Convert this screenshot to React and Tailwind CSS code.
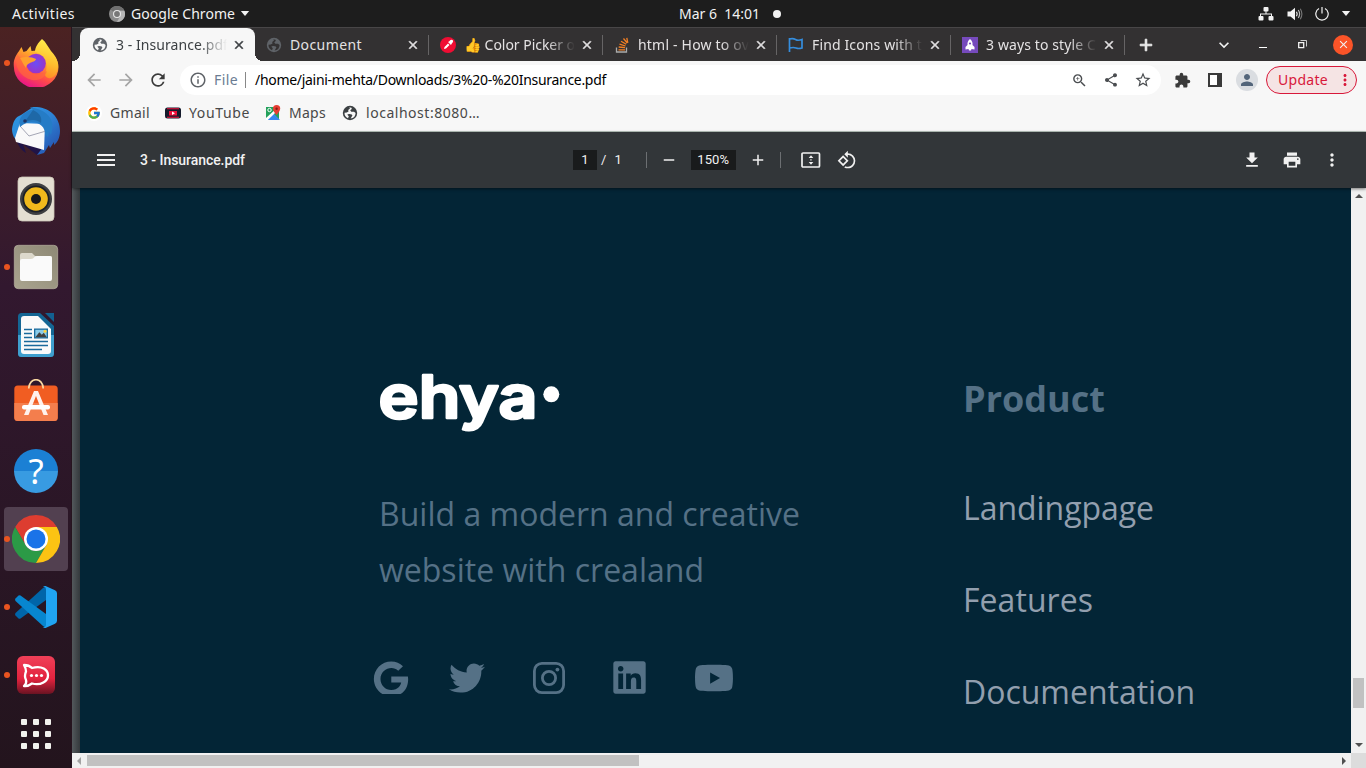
import { useLayoutEffect, useRef } from 'react';
import {
  MdAdd, MdArrowBack, MdArrowForward, MdClose, MdExtension, MdInfoOutline, MdKeyboardArrowDown,
  MdMenu, MdMoreVert, MdPerson, MdPrint, MdRefresh, MdRemove, MdRotate90DegreesCcw,
  MdShare, MdStarBorder, MdFileDownload, MdZoomIn,
} from 'react-icons/md';
import { FcGoogle } from 'react-icons/fc';
import { FaGoogle, FaLinkedin, FaTwitter, FaYoutube } from 'react-icons/fa';

// Spreads the letters so that the text fills exactly w pixels.
function Fit({ w, className = '', children }) {
  const ref = useRef(null);
  useLayoutEffect(() => {
    const el = ref.current;
    el.style.letterSpacing = '0px';
    const natural = el.getBoundingClientRect().width;
    el.style.letterSpacing = `${(w - natural) / el.textContent.length}px`;
  }, [w, children]);
  return <span ref={ref} className={`inline-block shrink-0 whitespace-pre ${className}`}>{children}</span>;
}

function Caret({ className = '' }) {
  return <svg viewBox="0 0 10 6" className={`h-[5px] w-[10px] shrink-0 ${className}`}><path d="M0 0h10L5 6z" fill="#f2f2f2" /></svg>;
}

// A solid disc with the seas left open as even-odd holes.
function Globe({ className = '' }) {
  return (
    <svg viewBox="0 0 16 16" className={`size-4 shrink-0 ${className}`} fill="currentColor" fillRule="evenodd">
      <path d="M8 .8a7.200 7.200 0 1 1 0 14.400A7.200 7.200 0 0 1 8 .8zM2.500 7.800Q2.300 11.800 6 13.200L6.800 11.200 5.300 9.800Q6 8.800 7.500 9L9.800 9.500Q11 10.300 9.800 11.500L8.600 13.500Q13.300 13 13.600 8L12 6.800H9.300L8.200 5.200 9.800 4 9.500 2.700Q8.300 2.400 7.200 2.600L8 3.500 6.200 5 6.500 6.500 4.800 7.500z" />
    </svg>
  );
}

function TopBar() {
  return (
    <header className="flex h-[27px] shrink-0 items-center bg-[#1d1d1d] text-sm text-[#f2f2f2]">
      <div className="flex w-[679px] items-center pl-3">
        <Fit w={63}>Activities</Fit>
        <svg viewBox="0 0 16 16" className="ml-[34px] size-4">
          <circle cx="8" cy="8" r="8" fill="#8b8b8b" />
          <path d="M8 4.4h7.2A8 8 0 0 1 8 16l3.2-6z" fill="#b5b5b5" />
          <path d="M1.5 3.5A8 8 0 0 1 15.2 4.4H8L4.8 6z" fill="#707070" />
          <circle cx="8" cy="8" r="4" fill="#e8e8e8" /><circle cx="8" cy="8" r="2.9" fill="#777" />
        </svg>
        <Fit w={104} className="ml-[6px]">Google Chrome</Fit>
        <Caret className="ml-[5px]" />
      </div>
      <Fit w={81}>{'Mar 6  14:01'}</Fit>
      <span className="ml-[13px] size-2 rounded-full bg-[#f2f2f2]" />
      <div className="ml-auto flex items-center pr-[15px]">
        <svg viewBox="0 0 16 14" className="h-[14px] w-4" fill="#f2f2f2">
          <rect x="5.5" y="0" width="5" height="4.5" rx="1" /><rect x="0.500" y="9" width="5" height="4.5" rx="1" /><rect x="10.5" y="9" width="5" height="4.5" rx="1" />
          <path d="M7.5 4h1v2.5H14V9h-1V7.500H3V9H2V6.500h5.500z" />
        </svg>
        <svg viewBox="0 0 16 14" className="ml-[13px] h-[14px] w-4">
          <path d="M0.500 4.500h3L8 .8v12.400L3.500 9.500h-3z" fill="#f2f2f2" />
          <path d="M9.500 4.700q1.400 2.300 0 4.600" stroke="#f2f2f2" strokeWidth="1.200" fill="none" />
          <path d="M11.300 3q2.600 4 0 8" stroke="#bbb" strokeWidth="1.200" fill="none" />
          <path d="M13.300 1.800q3.200 5.200 0 10.400" stroke="#777" strokeWidth="1.100" fill="none" />
        </svg>
        <svg viewBox="0 0 14 14" className="ml-[12px] size-[14px]" fill="none" stroke="#f2f2f2" strokeWidth="1.200">
          <path d="M4 1.500a6.200 6.200 0 1 0 6 0M7 0v6.500" />
        </svg>
        <Caret className="ml-[12px]" />
      </div>
    </header>
  );
}

const dockIcons = {
  firefox: (
    <svg viewBox="0 0 48 48" className="size-12">
      <defs>
        <linearGradient id="fxBody" x1="0.8" y1="0" x2="0.3" y2="1"><stop offset="0" stopColor="#fff44f" /><stop offset=".35" stopColor="#ffa22c" /><stop offset=".7" stopColor="#ff4a4a" /><stop offset="1" stopColor="#e5108f" /></linearGradient>
        <linearGradient id="fxFlame" x1="0.6" y1="0" x2="0.4" y2="1"><stop offset="0" stopColor="#fff24d" /><stop offset=".6" stopColor="#ffbd2e" /><stop offset="1" stopColor="#ff8a25" /></linearGradient>
        <radialGradient id="fxGlobe"><stop offset="0" stopColor="#6b4df5" /><stop offset="1" stopColor="#9a34c9" /></radialGradient>
      </defs>
      <path d="M7 12 9.500 8l2 5 3-1 4-5 1 5 11-1 3-5 6 8c4 4 7 8 7 14a22.300 21 0 0 1-44.600 0c-1-7 2-12 6.600-18z" fill="url(#fxBody)" />
      <path d="M30 0c4 3 6 8 9 12 7 7 9 15 5 23-4 6-11 5-11 0 5-12-3-21-10-22 0-5 3-9 7-13z" fill="url(#fxFlame)" />
      <circle cx="24" cy="24.500" r="9.800" fill="url(#fxGlobe)" />
      <path d="M5 15q3 5 8 5l2 1q-2 4 0 8c4 8 14 8 20 3-2 7-8 10-15 9C7 38 2 27 5 15z" fill="#ff6a3c" fillOpacity=".65" />
      <path d="M8 19c7-2 12-1 16 1 0 2-4 3-6 4-3 1-4 3-4 5-3-4-4-7-6-10z" fill="#ffa12d" />
    </svg>
  ),
  thunderbird: (
    <svg viewBox="0 0 48 48" className="size-12">
      <defs><linearGradient id="tbBlue" x1="0" y1="0" x2="1" y2="1"><stop offset="0" stopColor="#2c9be5" /><stop offset=".5" stopColor="#2e83d5" /><stop offset="1" stopColor="#2449a8" /></linearGradient></defs>
      <path d="M4 32q3 10 10 14l-3-9 22 5-8 6z" fill="#201448" />
      <path d="M21 0c15-1 27 9 27 24 0 7-3 12-6 14l0-3-4 6-1-3-5 8-7 2 6-8L6 34C2 32 0 27 0 22 1 15 3 10 9 8z" fill="url(#tbBlue)" />
      <path d="M3 31 8 16l25 1-1 26L4 35z" fill="#f9f9fa" />
      <path d="m8 19 9 10 17-5" fill="none" stroke="#a4a6b5" />
      <path d="M8 20C5 10 14 3 21 3l-3-3c18 3 26 13 21 28l-2-4-1 6-3-3C34 18 20 9 8 20z" fill="#257cc6" />
      <path d="M21 3c8 4 9 8 8 13-5-4-11-4-17 0z" fill="#1d639f" fillOpacity=".8" /><circle cx="13" cy="14" r="1.800" fill="#1c3466" />
    </svg>
  ),
  rhythmbox: (
    <svg viewBox="0 0 48 48" className="size-12">
      <rect x="6" y="2" width="36" height="44" rx="4" fill="#e4dfd2" stroke="#cbc5b6" strokeWidth=".8" />
      <circle cx="24" cy="24" r="16" fill="#3e3f41" /><circle cx="24" cy="24" r="13.600" fill="#1c2027" />
      <circle cx="24" cy="24" r="11.800" fill="#f0b91c" /><circle cx="24" cy="24" r="5" fill="#17191c" />
    </svg>
  ),
  files: (
    <svg viewBox="0 0 48 48" className="size-12">
      <defs><linearGradient id="flBg" x1="0" y1="1" x2="1" y2="0"><stop offset="0" stopColor="#aaa48f" /><stop offset="1" stopColor="#8e8976" /></linearGradient></defs>
      <rect x="2.300" y="2.300" width="43.400" height="43.400" rx="4" fill="url(#flBg)" stroke="#b8b2a0" strokeWidth=".7" />
      <path d="M8 35V12q0-2 2-2h10l3 3h15q2 0 2 2v20z" fill="#dcd8cb" />
      <path d="M8 18q0-2 2-2h9q2 0 4-2.500 1-.5 2-.5h13q2 0 2 2v21q0 2-2 2H10q-2 0-2-2z" fill="#fafafa" />
    </svg>
  ),
  writer: (
    <svg viewBox="0 0 48 48" className="size-12">
      <path d="M9.500 2H28l14 13v27q0 4-3.500 4H9.500Q6 46 6 42.500V5.500Q6 2 9.500 2z" fill="#146694" />
      <path d="M6 24h36v18.500q0 3.500-3.500 3.500h-29Q6 46 6 42.500z" fill="#3f9fce" />
      <path d="M33 2h9v9z" fill="#126090" />
      <path d="M12 5h14l13 13v22q0 3-3 3H12q-3 0-3-3V8q0-3 3-3z" fill="#fafafa" />
      <path d="M12 18.500h8M12 22.500h8M12 26.500h8M12 30.500h24M12 34.500h24M12 38.500h18" stroke="#1a6a9c" strokeWidth="1.600" />
      <path d="M22 17.500h14v10H22z" fill="#1a6a9c" /><path d="M23.300 18.800h11.400v7.400H23.300z" fill="#8acbe9" />
      <path d="m23.300 26.200 4-5 2.500 2.500 2-2 3 4.500z" fill="#404040" /><circle cx="33" cy="20.300" r="1.500" fill="#ffd23b" />
    </svg>
  ),
  software: (
    <svg viewBox="0 2 48 48" className="size-12">
      <path d="M17 11c0-11 14-11 14 0" fill="none" stroke="#fbd9a2" strokeWidth="1.700" />
      <rect x="2.300" y="8.500" width="43.400" height="35.500" rx="3.500" fill="#f15d22" />
      <path d="M2.300 26h43.400v14.500q0 3.500-3.500 3.500H5.800q-3.500 0-3.500-3.500z" fill="#f47e4d" />
      <path d="M16.800 11.500q0-2 .8-3.500M31.200 11.500q0-2-.8-3.500" fill="none" stroke="#fbd9a2" strokeWidth="1.700" />
      <path d="m22 14-10 24h4.500L24 19l7.500 19H36L26 14z" fill="#fff2ed" /><rect x="10" y="28" width="28" height="4.500" rx="2" fill="#fff" />
    </svg>
  ),
  help: (
    <div className="flex size-[44px] items-center justify-center rounded-full bg-linear-to-b from-[#1b80d4] from-50% to-[#389be2] to-50% pb-px font-['Noto_Sans'] text-[35px] leading-none text-white">?</div>
  ),
  chrome: (
    <svg viewBox="0 0 48 48" className="size-12">
      <path d="M24 0a24 24 0 0 1 20.800 12H24L13.600 30 3.200 12A24 24 0 0 1 24 0z" fill="#dd3d30" />
      <path d="M3.200 12 13.600 30A12 12 0 0 0 34.400 30L24 48A24 24 0 0 1 3.200 12z" fill="#2b9a46" />
      <path d="M44.800 12A24 24 0 0 1 24 48l10.400-18L24 12z" fill="#fcc313" />
      <circle cx="24" cy="24" r="12" fill="#fff" /><circle cx="24" cy="24" r="9.500" fill="#1a73e8" />
    </svg>
  ),
  code: (
    <svg viewBox="0 0 48 48" className="size-12">
      <path d="M34 3v14L8.500 35.500q-1 .6-2 0l-3-3q-1-1.200 0-2.500L31 5z" fill="#0065a9" />
      <path d="M34 45V31L8.500 12.500q-1-.6-2 0l-3 3q-1 1.200 0 2.500L31 43z" fill="#0786cf" />
      <path d="m33.500 3 9.500 4.200q2 1 2 3v27.600q0 2-2 3L33.500 45q-1.500.4-3-1 3.500 1 3.500-2.500V6.500Q34 3 31 4q1-1.400 2.500-1z" fill="#20a4f2" />
    </svg>
  ),
  chat: (
    <svg viewBox="0 0 48 48" className="size-12">
      <defs><linearGradient id="rcBg" x1="0" y1="0" x2="0" y2="1"><stop offset="0" stopColor="#f04058" /><stop offset=".6" stopColor="#e2233e" /><stop offset="1" stopColor="#6a1322" /></linearGradient></defs>
      <rect x="5" y="5" width="38" height="38" rx="6" fill="url(#rcBg)" />
      <path d="M12 14q5 0 8 3c10-3 16 2 16 7.500S29 35 20 32.500q-4 3-8 2.500 3-3 2-6-2-4 0-8.500 0-3-2-6.500z" fill="none" stroke="#fff" strokeWidth="2.300" strokeLinejoin="round" />
      <g fill="#fff"><circle cx="19.500" cy="24.500" r="1.600" /><circle cx="24.500" cy="24.500" r="1.600" /><circle cx="29.500" cy="24.500" r="1.600" /></g>
    </svg>
  ),
};

const dock = [
  ['firefox', true], ['thunderbird', false], ['rhythmbox', false], ['files', true], ['writer', false],
  ['software', false], ['help', false], ['chrome', true], ['code', true], ['chat', true],
];

function Dock() {
  return (
    <aside className="flex w-[72px] shrink-0 flex-col border-r border-[#26151f] bg-linear-to-b from-[#4b2222] via-[#32182f] via-35% to-[#23141d] pt-[2px]">
      {dock.map(([name, running]) => (
        <div key={name} className="flex h-[68px] shrink-0 items-center py-[2px]">
          <span className={`ml-1 size-[6px] shrink-0 rounded-full ${running ? 'bg-[#e95420]' : ''} ${name === 'chrome' ? 'z-10' : ''}`} />
          <div className={`-ml-[6px] flex size-16 shrink-0 items-center justify-center rounded-sm ${name === 'chrome' ? 'bg-[#524050]' : ''}`}>{dockIcons[name]}</div>
        </div>
      ))}
      <div className="mx-auto mt-[10px] grid w-fit grid-cols-3 gap-[6px]">
        {Array.from({ length: 9 }, (_, i) => <span key={i} className="size-[6px] rounded-[1px] bg-[#f2f2ee]" />)}
      </div>
    </aside>
  );
}

const tabs = [
  { title: '3 - Insurance.pdf', w: 112, icon: <Globe className="text-[#5f6368]" />, active: true },
  { title: 'Document', w: 72, icon: <Globe className="text-[#5f6368]" /> },
  {
    title: '👍 Color Picker o', w: 111,
    icon: <svg viewBox="0 0 16 16" className="size-4"><circle cx="8" cy="8" r="8" fill="#ef0d33" /><path d="m4 12 .5-2L8 6.500 9.500 8 6 11.500zM8 5l1-.5 1.500-1.500q1.500-.6 2.300.3.700.900 0 2L11.500 7l-.5 1z" fill="#fff" /></svg>,
  },
  {
    title: 'html - How to ov', w: 111,
    icon: <svg viewBox="0 0 16 16" className="size-4" fill="none"><path d="M2.500 10.500V15h10v-4.500" stroke="#aaa" strokeWidth="1.300" /><path d="M4.500 12.800h6.500M4.700 10l6.300.7M5.500 7.200l6 1.800M7 4.200l5.200 3M9.500 1.500l3.800 4.500M12.800.8l1 5" stroke="#f48024" strokeWidth="1.300" /></svg>,
  },
  {
    title: 'Find Icons with t', w: 110,
    icon: <svg viewBox="0 0 16 16" className="size-4" fill="none" stroke="#358ddd" strokeWidth="1.700"><path d="M1.500 1v14M1.500 2q3.500-1 6 .5t6.500 0v8.500q-3.500 1-6 0t-6.500 0" /></svg>,
  },
  {
    title: '3 ways to style C', w: 110,
    icon: <svg viewBox="0 0 16 16" className="size-4"><path d="M0 0h16v16H0z" fill="#764abc" /><path d="M8 2q3 2.500 2.500 6l2 2v2.500l-3-.5-.5 1.500H7L6.500 12l-3 .5V10l2-2Q5 4.500 8 2z" fill="#fff" /><circle cx="8" cy="6.500" r="1.100" fill="#764abc" /></svg>,
  },
];

function TabStrip() {
  return (
    <div className="flex h-[34px] shrink-0 border-t border-[#484647] bg-[#333132] pl-2 text-sm">
      {tabs.map((t, i) => (
        <div key={t.title} className={`flex shrink-0 items-center ${t.active ? "relative w-[175px] rounded-t-lg bg-[#f7f7f7] pl-3 text-[#3c4043] before:absolute before:bottom-0 before:-left-2 before:size-2 before:bg-[radial-gradient(circle_at_0_0,#333132_8px,#f7f7f7_8px)] after:absolute after:-right-2 after:bottom-0 after:size-2 after:bg-[radial-gradient(circle_at_100%_0,#333132_8px,#f7f7f7_8px)]" : 'w-[174px] pl-[11px] text-[#e4e2e3]'}`}>
          <span className="flex w-4 shrink-0 justify-center">{t.icon}</span>
          <div className={`ml-2 w-[111px] shrink-0 overflow-hidden ${i === 1 ? '' : 'mask-r-from-75% mask-r-to-100%'}`}><Fit w={t.w}>{t.title}</Fit></div>
          <MdClose className="ml-[5px] size-[14px] shrink-0 [&>path:last-child]:stroke-1" />
          {!t.active && <span className="ml-auto h-5 w-px bg-[#666465]" />}
        </div>
      ))}
      <div className="flex flex-1 items-center text-[#f2f2f2]">
        <MdAdd className="ml-[11px] size-5 [&>path:last-child]:stroke-1" />
        <MdKeyboardArrowDown className="ml-[58px] size-5" />
        <span className="mt-[5px] ml-[25px] h-px w-2 bg-white" />
        <svg viewBox="0 0 9 9" className="ml-[31px] size-[9px]" fill="none" stroke="#f2f2f2"><path d="M.7 2.700h5v5h-5z" strokeWidth="1.300" /><path d="M2.500.5h6v6" strokeWidth=".8" /></svg>
        <span className="ml-[26px] flex size-5 items-center justify-center rounded-full bg-[#fb5428]"><MdClose className="size-[13px]" /></span>
      </div>
    </div>
  );
}

function Toolbar() {
  return (
    <div className="flex h-[38px] shrink-0 items-center bg-[#f7f7f7] text-sm">
      <MdArrowBack className="ml-3 size-5 text-[#a5a5a5]" />
      <MdArrowForward className="ml-3 size-5 text-[#a5a5a5]" />
      <MdRefresh className="ml-3 size-5 text-[#3a3a3a]" />
      <div className="ml-3 flex h-[30px] w-[981px] shrink-0 items-center rounded-full bg-white pl-[9px]">
        <MdInfoOutline className="size-[18px] text-[#5f6368]" />
        <Fit w={24} className="ml-[7px] text-[#6b7c93]">File</Fit>
        <span className="ml-[7px] h-4 w-px bg-[#888]" />
        <Fit w={351} className="ml-[9px] text-black">/home/jaini-mehta/Downloads/3%20-%20Insurance.pdf</Fit>
        <div className="ml-auto flex items-center gap-[15px] pr-[9px] text-[#4a4d50]">
          <MdZoomIn className="size-[17px]" /><MdShare className="size-4" /><MdStarBorder className="size-[18px]" />
        </div>
      </div>
      <MdExtension className="ml-[13px] size-[17px] text-[#3a3a3a]" />
      <svg viewBox="0 0 14 14" className="ml-[17px] size-[14px]"><path d="M0 0h14v14H0z" fill="#3a3a3a" /><path d="M2 2h7v10H2z" fill="#fff" /></svg>
      <span className="ml-[14px] flex size-[22px] shrink-0 items-center justify-center rounded-full bg-[#dadde1]"><MdPerson className="size-[18px] text-[#53657a]" /></span>
      <div className="ml-2 flex h-7 w-[91px] shrink-0 items-center rounded-full border border-[#d8183a] bg-[#f5e4e4] pl-[11px] text-[#d8183a]">
        <Fit w={50}>Update</Fit>
        <MdMoreVert className="ml-[8px] size-[18px]" />
      </div>
    </div>
  );
}

function Bookmarks() {
  return (
    <div className="flex h-[33px] shrink-0 items-start border-b border-[#b9c6be] bg-[#f7f7f7] pl-[14px] text-sm text-[#484848]">
      <div className="flex h-7 items-center">
        <span className="flex size-4 shrink-0 items-center justify-center rounded-full bg-white"><FcGoogle className="size-[14px]" /></span>
        <Fit w={40} className="ml-2">Gmail</Fit>
        <svg viewBox="0 0 16 12" className="ml-[15px] h-3 w-4"><rect y=".5" width="16" height="11" rx="2.500" fill="#141b2c" /><path d="M2 1.300h12v1H2zM2 9.800h12v1H2zM4 4h8v4.500H4z" fill="#f0103b" /><path d="m7 4.500 3 1.700-3 1.700z" fill="#fff" /></svg>
        <Fit w={61} className="ml-2">YouTube</Fit>
        <svg viewBox="0 0 16 16" className="ml-[15px] size-4">
          <path d="M1 2h13v13H1z" fill="#24a15c" /><path d="m2 15 6-7 7 7z" fill="#4285f4" /><path d="m1 13 12-11 2 1L3 15H1z" fill="#fff" /><path d="m3 15 6-5 5 5z" fill="#3687ef" />
          <circle cx="4.500" cy="5" r="1.700" fill="none" stroke="#fff" /><path d="M11.500 10Q8 6 8 3.700a3.600 3.600 0 0 1 7.200 0Q15 6 11.500 10z" fill="#e63e33" /><circle cx="11.600" cy="3.700" r="1.200" fill="#871c18" />
        </svg>
        <Fit w={37} className="ml-[8px]">Maps</Fit>
        <Globe className="ml-4 text-[#3c4043]" />
        <Fit w={114} className="ml-[8px]">localhost:8080…</Fit>
      </div>
    </div>
  );
}

function PdfBar() {
  return (
    <div className="z-10 flex h-14 shrink-0 items-center bg-[#323639] font-[Roboto] text-[#f1f1f1] shadow-[0_1px_3px_rgba(0,0,0,0.5)]">
      <MdMenu className="ml-[22px] size-6" />
      <Fit w={105} className="ml-[22px] text-sm font-medium">3 - Insurance.pdf</Fit>
      <div className="ml-[328px] flex items-center text-[13px]">
        <span className="flex h-5 w-6 items-center justify-center bg-[#191b1c]">1</span>
        <span className="ml-1">/</span><span className="ml-[8px]">1</span>
        <span className="ml-[24px] h-4 w-px bg-[#6c6f72]" />
        <MdRemove className="ml-[13px] size-[18px]" />
        <span className="ml-[13px] flex h-5 w-[45px] items-center justify-center bg-[#191b1c]"><Fit w={32}>150%</Fit></span>
        <MdAdd className="ml-[13px] size-[18px]" />
        <span className="ml-[13px] h-4 w-px bg-[#6c6f72]" />
        <svg viewBox="0 0 20 16" className="ml-5 h-4 w-5"><rect x="1" y="1" width="17.500" height="14" rx="1" fill="none" stroke="#f1f1f1" strokeWidth="1.700" /><path d="M10 3.200 12.300 6H7.700zM10 12.800 7.700 10h4.600zM9.300 7.300h1.300v1.300H9.300z" fill="#f1f1f1" /></svg>
        <MdRotate90DegreesCcw className="ml-[16px] size-5" />
      </div>
      <div className="ml-auto flex items-center gap-5 pr-6">
        <MdFileDownload className="size-5" /><MdPrint className="size-5" /><MdMoreVert className="size-5" />
      </div>
    </div>
  );
}

function Page() {
  return (
    <main className="flex min-w-0 flex-1 overflow-hidden bg-[#032536] font-['Open_Sans'] text-[32px]">
      <section className="w-[884px] shrink-0 pt-[177px]">
        <div className="pl-[296px] text-white">
          <svg viewBox="0 0 190 72" className="h-[72px] w-[190px]" fill="#fff" stroke="#fff">
            <text x="2.500" y="53.300" textLength="159" lengthAdjust="spacingAndGlyphs" className="font-[Inter] text-[59px] font-semibold" strokeWidth="2.600" strokeLinejoin="round">ehya</text>
            <circle cx="175.300" cy="29.300" r="8" stroke="none" />
          </svg>
        </div>
        <p className="mt-[49px] pl-[299px] leading-[56px] text-[#557186]">
          <Fit w={421}>Build a modern and creative</Fit><br /><Fit w={325}>website with crealand</Fit>
        </p>
        <div className="mt-[63px] flex h-[33px] items-center overflow-hidden pl-[293px] text-[#557186]">
          <FaGoogle className="size-[36px] shrink-0 translate-y-[1px]" />
          <FaTwitter className="ml-[40px] size-[36px]" />
          <svg viewBox="0 0 32 32" className="ml-[48px] size-8" fill="none" stroke="currentColor" strokeWidth="2.800">
            <rect x="1.400" y="1.400" width="29.200" height="29.200" rx="7.500" /><circle cx="16" cy="16" r="6.600" />
            <circle cx="24.400" cy="7.600" r="1.900" fill="currentColor" stroke="none" />
          </svg>
          <FaLinkedin className="ml-[46px] size-[37px]" />
          <FaYoutube className="ml-[46px] size-[40px]" />
        </div>
      </section>
      <section className="-ml-px pt-[183px]">
        <h2 className="text-[36px] leading-[56px] font-bold text-[#557186]"><Fit w={142}>Product</Fit></h2>
        <ul className="mt-[35px] leading-[92px] text-[#929fae]">
          <li className="h-[92px]"><Fit w={191}>Landingpage</Fit></li>
          <li className="h-[92px]"><Fit w={130}>Features</Fit></li>
          <li className="h-[92px]"><Fit w={232}>Documentation</Fit></li>
        </ul>
      </section>
    </main>
  );
}

export default function App() {
  return (
    <div className="flex h-[768px] w-[1366px] flex-col overflow-hidden font-['Noto_Sans',sans-serif]">
      <TopBar />
      <div className="flex min-h-0 flex-1">
        <Dock />
        <div className="flex min-w-0 flex-1 flex-col">
          <TabStrip />
          <Toolbar />
          <Bookmarks />
          <PdfBar />
          <div className="flex min-h-0 flex-1">
            <div className="w-2 shrink-0 bg-linear-to-r from-[#53595c] to-[#34393c]" />
            <Page />
            <div className="flex w-[15px] shrink-0 flex-col items-center bg-[#f1f1f1]">
              <svg viewBox="0 0 8 4" className="mt-[6px] h-1 w-2"><path d="M4 0l4 4H0z" fill="#505050" /></svg>
              <div className="mt-[480px] h-[30px] w-[11px] bg-[#c1c1c1]" />
              <svg viewBox="0 0 8 4" className="mt-[35px] h-1 w-2"><path d="M0 0h8L4 4z" fill="#505050" /></svg>
            </div>
          </div>
          <div className="flex h-[15px] shrink-0 items-center bg-[#f1f1f1]">
            <svg viewBox="0 0 4 8" className="ml-[5px] h-2 w-1"><path d="M4 0v8L0 4z" fill="#a3a3a3" /></svg>
            <div className="ml-[6px] h-[11px] w-[552px] bg-[#c1c1c1]" />
            <svg viewBox="0 0 4 8" className="mr-[5px] ml-auto h-2 w-1"><path d="M0 0l4 4-4 4z" fill="#505050" /></svg>
            <span className="h-full w-[15px] bg-[#dcdcdc]" />
          </div>
        </div>
      </div>
    </div>
  );
}
